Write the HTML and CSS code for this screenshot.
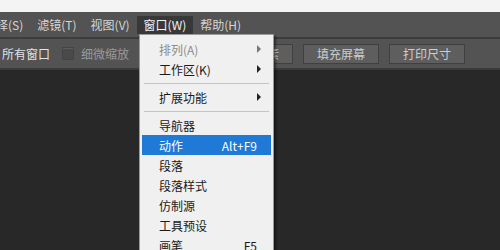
FILE: index.html
```html
<!doctype html>
<html>
<head>
<meta charset="utf-8">
<title>窗口菜单</title>
<link rel="stylesheet" href="styles.css">
</head>
<body>
<div class="topStrip"></div>
<div class="menuBar">
  <span class="menuItem first">选择(S)</span>
  <span class="menuItem">滤镜(T)</span>
  <span class="menuItem">视图(V)</span>
  <span class="menuItem active">窗口(W)</span>
  <span class="menuItem">帮助(H)</span>
</div>
<div class="optionsBar">
  <span class="optLabel">所有窗口</span>
  <span class="checkBox"></span>
  <span class="optLabel dim">细微缩放</span>
  <span class="optBtn hidden">实际像素</span>
  <span class="optBtn">填充屏幕</span>
  <span class="optBtn">打印尺寸</span>
</div>
<div class="canvas"></div>

<div class="dropMenu">
  <div class="dropItem disabled"><span>排列(A)</span><span class="arrow"></span></div>
  <div class="dropItem"><span>工作区(K)</span><span class="arrow"></span></div>
  <div class="sep"></div>
  <div class="dropItem"><span>扩展功能</span><span class="arrow"></span></div>
  <div class="sep"></div>
  <div class="dropItem"><span>导航器</span></div>
  <div class="dropItem selected"><span>动作</span><span class="key">Alt+F9</span></div>
  <div class="dropItem"><span>段落</span></div>
  <div class="dropItem"><span>段落样式</span></div>
  <div class="dropItem"><span>仿制源</span></div>
  <div class="dropItem"><span>工具预设</span></div>
  <div class="dropItem"><span>画笔</span><span class="key">F5</span></div>
</div>
</body>
</html>
```

FILE: styles.css
```css
html, body {
	margin: 0;
	height: 100%;
}
body {
	width: 500px;
	height: 250px;
	overflow: hidden;
	position: relative;
	display: flex;
	flex-direction: column;
	background: #282828;
	font-family: "Noto Sans CJK SC", "Noto Sans", sans-serif;
	font-size: 12px;
}
.topStrip {
	height: 12px;
	background: #f4f4f4;
}
.menuBar {
	height: 25px;
	background: #535353;
	display: flex;
	align-items: center;
	color: #d6d6d6;
	border-bottom: 2px solid #3c3c3c;
}
.menuItem {
	height: 18px;
	line-height: 18px;
	padding: 0 7px;
	white-space: nowrap;
}
.menuItem.first {
	margin-left: -23px;
}
.menuItem.active {
	background: #383838;
	color: #f2f2f2;
}
.optionsBar {
	height: 29px;
	background: #535353;
	display: flex;
	align-items: center;
	color: #e2e2e2;
	border-bottom: 2px solid #3a3a3a;
}
.optLabel {
	margin-left: 2px;
	white-space: nowrap;
}
.optLabel.dim {
	color: #9a9a9a;
	margin-left: 7px;
}
.checkBox {
	width: 10px;
	height: 11px;
	margin-left: 12px;
	background: #4a4a4a;
	border: 1px solid #444;
	box-shadow: inset 0 1px 0 #5c5c5c;
}
.optBtn {
	height: 18px;
	line-height: 18px;
	padding: 0 13px;
	margin-left: 10px;
	background: #5e5e5e;
	border: 1px solid #404040;
	color: #cdcdcd;
	white-space: nowrap;
}
.optBtn.hidden {
	margin-left: 88px;
}
.canvas {
	flex: 1;
	background: #282828;
}
.dropMenu {
	position: absolute;
	left: 139px;
	top: 34px;
	width: 129px;
	padding: 4px 2px 0 2px;
	height: 250px;
	background: #f0f0f0;
	border: 1px solid #9a9a9a;
	box-shadow: 2px 2px 2px rgba(0, 0, 0, 0.45);
	color: #1a1a1a;
}
.dropItem {
	height: 20px;
	display: flex;
	align-items: center;
	justify-content: space-between;
	padding: 0 10px 0 17px;
	white-space: nowrap;
}
.dropItem.disabled {
	color: #8c8c8c;
}
.dropItem.selected {
	background: #1e7ad6;
	color: #fff;
}
.key {
	margin-right: 4px;
}
.arrow {
	width: 0;
	height: 0;
	border-left: 4px solid #222;
	border-top: 4px solid transparent;
	border-bottom: 4px solid transparent;
}
.disabled .arrow {
	border-left-color: #777;
}
.sep {
	height: 8px;
	display: flex;
	align-items: center;
}
.sep::before {
	content: "";
	flex: 1;
	margin: 0 2px 0 2px;
	border-top: 1px solid #c4c4c4;
}
```
